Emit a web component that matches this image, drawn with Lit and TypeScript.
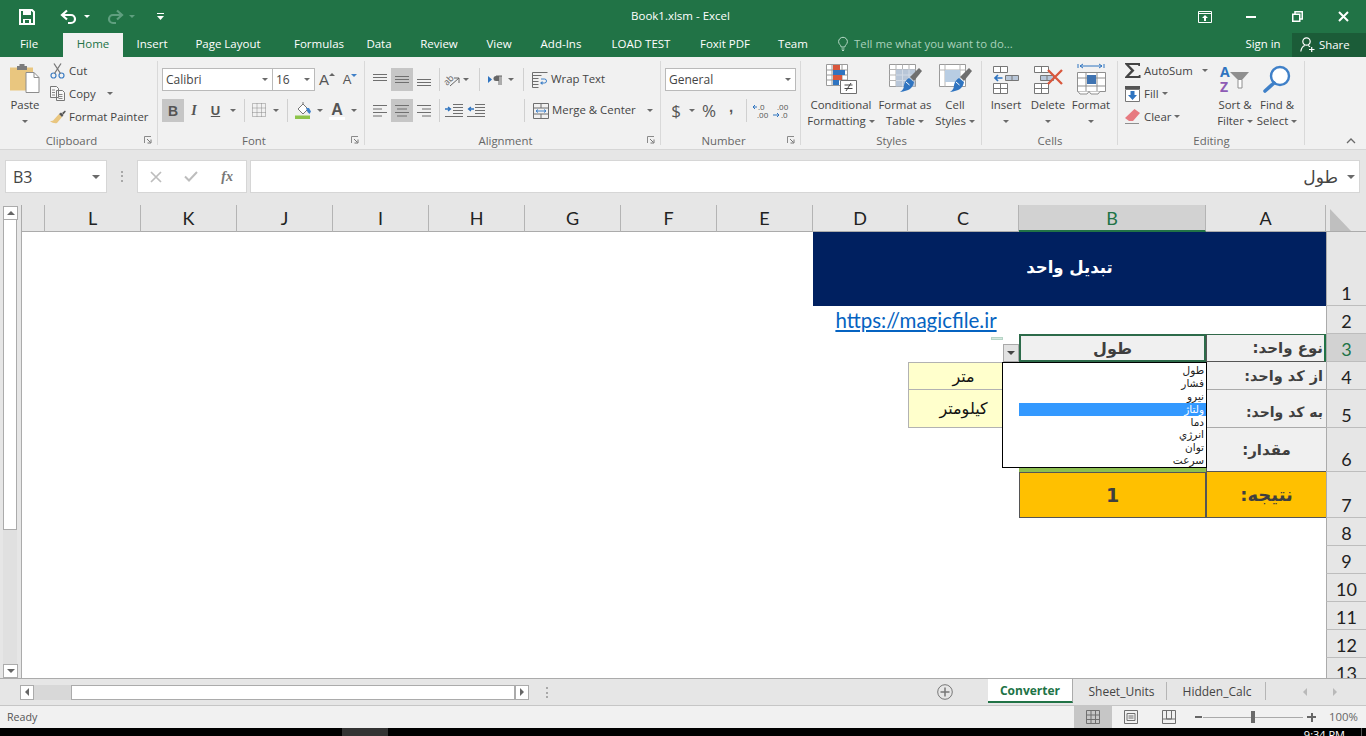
import { LitElement, html, svg, css } from "lit";
import { customElement } from "lit/decorators.js";

const L4 = (xs: number[], ws: number[]) =>
  html`<svg class="ico" width="16" height="16" viewBox="0 0 16 16">${xs.map((x, i) => svg`<path d="M${x} ${2.5 + i * 3.5}h${ws[i]}" stroke="#6f6f6f"/>`)}</svg>`;
const V3 = (ys: number[]) =>
  html`<svg class="ico" width="16" height="16" viewBox="0 0 16 16">${ys.map((y) => svg`<path d="M1 ${y + 0.5}h14" stroke="#6f6f6f"/>`)}</svg>`;

const saveI = html`<svg class="ico" width="16" height="16" viewBox="0 0 16 16"><path d="M1 1h12l2 2v12H1z" fill="none" stroke="#fff" stroke-width="2"/><path d="M4 1h8v5H4zM4 10h8v5H4z" fill="#fff"/><path d="M6 11h4v3H6z" fill="#217346"/></svg>`;
const undoI = (c: string, flip = false) => html`<svg class=${flip ? "ico flip" : "ico"} width="16" height="14" viewBox="0 0 16 14"><path d="M2 5h8a4 4 0 0 1 0 8H7" fill="none" stroke=${c} stroke-width="2.2"/><path d="M6 .5 1 5l5 4.5" fill="none" stroke=${c} stroke-width="2.2"/></svg>`;
const qatI = html`<svg class="ico" width="7" height="8" viewBox="0 0 7 8"><path d="M0 .5h7" stroke="#fff"/><path d="M0 3h7L3.5 7z" fill="#fff"/></svg>`;
const dispI = html`<svg class="ico" width="14" height="12" viewBox="0 0 14 12"><path d="M.5.5h13v11H.5z" fill="none" stroke="#fff"/><path d="M.5 2.5h13" stroke="#fff"/><path d="M7 4 4 7h2v3h2V7h2z" fill="#fff"/></svg>`;
const minI = html`<svg class="ico" width="10" height="2" viewBox="0 0 10 2"><path d="M0 0h10v2H0z" fill="#fff"/></svg>`;
const restI = html`<svg class="ico" width="11" height="11" viewBox="0 0 11 11"><path d="M.75 3.25h7v7h-7zM3 3V.75h7.25V8H8" fill="none" stroke="#fff" stroke-width="1.5"/></svg>`;
const closeI = html`<svg class="ico" width="11" height="11" viewBox="0 0 11 11"><path d="M1 1l9 9M10 1l-9 9" stroke="#fff" stroke-width="2"/></svg>`;
const bulbI = html`<svg class="ico" width="10" height="14" viewBox="0 0 10 14"><path d="M3.2 10C3 8 .6 7.2.6 4.700a4.400 4.400 0 0 1 8.800 0C9.400 7.200 7 8 6.800 10zM3.500 12h3M4 13.500h2" fill="none" stroke="#b7d9c6"/></svg>`;
const shareI = html`<svg class="ico" width="15" height="15" viewBox="0 0 15 15"><circle cx="6.500" cy="4.500" r="3.700" fill="none" stroke="#fff" stroke-width="1.200"/><path d="M.8 14.500c.6-3.700 2.500-5.500 4-6M8 8.500c.8.300 1.500.7 2 1.300M9 12.500h5.500M11.700 10v5" fill="none" stroke="#fff" stroke-width="1.200"/></svg>`;

const pasteI = html`<svg class="ico" width="30" height="31" viewBox="0 0 30 31"><path d="M0 4.500h23v23H0z" fill="#e9c67f"/><path d="M7 3h2.500V1h5v2H17v4H7z" fill="#7c7c7c"/><path d="M16 9.500h8l5 5v15H16z" fill="#fff" stroke="#8d8d8d"/><path d="M24 9.500v5h5" fill="none" stroke="#8d8d8d"/></svg>`;
const cutI = html`<svg class="ico" width="15" height="16" viewBox="0 0 15 16"><circle cx="3.500" cy="12.500" r="2.500" fill="none" stroke="#3f7fc4" stroke-width="1.200"/><circle cx="11.500" cy="12.500" r="2.500" fill="none" stroke="#3f7fc4" stroke-width="1.200"/><path d="M4.500 10.500 11 .5M10.500 10.500 4 .5" stroke="#777" stroke-width="1.300"/></svg>`;
const copyI = html`<svg class="ico" width="15" height="15" viewBox="0 0 15 15"><path d="M.5.5h6l2 2v9H.5zM6.500 4.500h6l2 2v8h-8z" fill="#f7f7f7" stroke="#777"/><path d="M2 4h3M2 6.500h3M2 9h3M8.500 8.500h4M8.500 10.500h4M8.500 12.500h4" stroke="#888"/></svg>`;
const painterI = html`<svg class="ico" width="16" height="14" viewBox="0 0 16 14"><path d="M9 4l3 3-5 6c-2 .5-5 0-7-2 2 0 3.500-.5 4-1.500z" fill="#e9c67f"/><path d="M9 4l2-1.500 2.500 2.500L12 7z" fill="#555"/><path d="M12 3l3-2.500.8 1L13.500 4.500z" fill="#555"/></svg>`;

const gridI = html`<svg class="ico" width="16" height="16" viewBox="0 0 16 16"><path d="M.5.5h13v13H.5zM.5 5h13M.5 9.500h13M5 .5v13M9.500.5v13" fill="none" stroke="#8a8a8a" stroke-dasharray="1 1"/></svg>`;
const fillI = html`<svg class="ico" width="17" height="17" viewBox="0 0 17 17"><path d="M3 7l5-5 5 5-5 5z" fill="#fff" stroke="#777"/><path d="M8 2V0" stroke="#777"/><path d="M11 6h3l2 3.500-1.500 2.500L12.500 10z" fill="#3f80c8"/><path d="M0 13.500h15V17H0z" fill="#8dc44a"/></svg>`;
const wrapI = html`<svg class="ico" width="16" height="16" viewBox="0 0 16 16"><path d="M.5.500h15M.5 3.500h9M.5 6.500h6M.5 9.500h6M.5 12.500h6M.5.5v15h6" fill="none" stroke="#6f6f6f"/><path d="M9 7h3.500a2 2 0 0 1 0 4H9" fill="none" stroke="#3f80c8"/><path d="M10.500 9 8 11l2.500 2z" fill="#3f80c8"/></svg>`;
const mergeI = html`<svg class="ico" width="16" height="16" viewBox="0 0 16 16"><path d="M.5.5h15v15H.5zM.5 5h15M.5 11h15M8 .5V5M8 11v4.500" fill="none" stroke="#6f6f6f"/><path d="M3 8h10M5 6.500 3 8l2 1.500M11 6.500 13 8l-2 1.500" fill="none" stroke="#3f80c8"/></svg>`;
const indentI = (rev: boolean) => html`<svg class="ico" width="18" height="13" viewBox="0 0 18 13"><path d="M8 .5h10M8 3.500h10M8 6.500h10M8 9.500h10M0 12.500h18" stroke="#6f6f6f"/><path d=${rev ? "M7 5H2M4 3 1.500 5 4 7" : "M0 5h5M3 3l2.500 2L3 7"} fill="none" stroke="#2f74c0" stroke-width="1.300"/></svg>`;
const orientI = html`<svg class="ico" width="17" height="16" viewBox="0 0 17 16"><text x="0" y="11" transform="rotate(-45 5 9)" font-size="9" font-family="Open Sans" fill="#666">ab</text><path d="M6 14l9-8M15 11V6h-5" fill="none" stroke="#666"/></svg>`;
const paraI = html`<svg class="ico" width="14" height="10" viewBox="0 0 14 10"><path d="M0 1l4 3.500L0 8z" fill="#2f74c0"/><path d="M8 1h6M11 1v9M13 1v9" fill="none" stroke="#666"/><path d="M8 1a2.300 2.300 0 0 0 0 5h3V1z" fill="#666"/></svg>`;
const decL = html`<svg class="ico" width="18" height="16" viewBox="0 0 18 16"><text x="6" y="7" font-size="8" font-family="Open Sans" fill="#555">.0</text><text x="5" y="15" font-size="8" font-family="Open Sans" fill="#555">.00</text><path d="M5 4H1M3 2 1 4l2 2" fill="none" stroke="#2f74c0"/></svg>`;
const decR = html`<svg class="ico" width="18" height="16" viewBox="0 0 18 16"><text x="5" y="7" font-size="8" font-family="Open Sans" fill="#555">.00</text><text x="9" y="15" font-size="8" font-family="Open Sans" fill="#555">.0</text><path d="M1 12h6M5 10l2 2-2 2" fill="none" stroke="#2f74c0"/></svg>`;

const condI = html`<svg class="ico" width="32" height="31" viewBox="0 0 32 31"><g transform="translate(1 1)"><path d="M.5.5h21v21H.5zM.5 6h21M.5 11h21M.5 16h21M6 .5v21M11 .5v21M16 .5v21" fill="#fff" stroke="#9a9a9a"/><path d="M7 1h7v5H7z" fill="#d9573c"/><path d="M7 6h12v5H7z" fill="#2f74c0"/><path d="M7 11h9v5H7z" fill="#d9573c"/><path d="M7 16h6v5H7z" fill="#2f74c0"/></g><path d="M15.500 17.500h16v13h-16z" fill="#fff" stroke="#6f6f6f"/><path d="M19.500 22h8M19.500 25.500h8M26 20l-5 8" stroke="#444" fill="none"/></svg>`;
const tableI = (fill: boolean) => html`<svg class="ico" width="34" height="31" viewBox="0 0 34 31"><path d="M1.500 1.500h26v22h-26z" fill="#fff" stroke="#9a9a9a"/>${fill ? svg`<path d="M1.500 6.500h26M1.500 12h26M1.500 17.500h26M8 1.500v22M14.500 1.500v22M21 1.500v22" stroke="#b5b5b5" fill="none"/><path d="M8 6.500h19v17H8z" fill="#b8c6d8"/><path d="M8 12h19M8 17.500h19M14.500 6.500v17M21 6.500v17" stroke="#d3dbe6" fill="none"/>` : svg`<path d="M1.500 7h26M7 1.500v22M22 1.500v22" stroke="#b5b5b5" fill="none"/><path d="M7 7h15v12H7z" fill="#b8cde3"/>`}<path d="M22 14l9-9 3 3-8 10z" fill="#6f6f6f"/><path d="M21 15l5 4c-1 6-5 9-14 10 3-2 4-4 4-7 1-4 3-6 5-7z" fill="#2f74c0"/><path d="M18 19l3.500 3" stroke="#fff"/></svg>`;
const insI = html`<svg class="ico" width="28" height="31" viewBox="0 0 28 31"><path d="M1.500 3.500h14v6h-14zM8.500 3.500v6M1.500 20.500h14v10h-14zM8.500 20.500v10M1.500 25.500h14" fill="#fff" stroke="#777"/><path d="M13.500 12.500h13v5h-13zM20 12.500v5" fill="#b8c6d8" stroke="#777"/><path d="M10.500 15H3M6 12l-3 3 3 3" fill="none" stroke="#2f74c0" stroke-width="1.700"/></svg>`;
const delI = html`<svg class="ico" width="31" height="31" viewBox="0 0 31 31"><path d="M1.500 3.500h14v6h-14zM8.500 3.500v6M1.500 20.500h14v10h-14zM8.500 20.500v10M1.500 25.500h14" fill="#fff" stroke="#777"/><path d="M7.500 12.500h13v5h-13zM14 12.500v5" fill="#b8c6d8" stroke="#777"/><path d="M15 7l14 14M29 7 15 21" stroke="#d9573c" stroke-width="2.300"/></svg>`;
const fmtI = html`<svg class="ico" width="29" height="31" viewBox="0 0 29 31"><path d="M1 1v4M27 1v4M3 3h22M6 1 3 3l3 2M22 1l3 2-3 2" fill="none" stroke="#2f74c0"/><path d="M.5 9.500h28v19H.5zM9 9.500v19M20 9.500v19M.5 15h28M.5 23h28" fill="#fff" stroke="#8f8f8f"/><path d="M10 12h9v9h-9z" fill="#3f73b1"/><path d="M1 28.500l2 2.500h7l2-2.500M12 28.500l2 2.500h7l2-2.500" fill="#fff" stroke="#8f8f8f"/></svg>`;
const sigmaI = html`<svg class="ico" width="16" height="15" viewBox="0 0 16 15"><path d="M0 0h15v3h-1.500L13 2H4l5.500 5.500L4 13h9.500l.5-1h1.500v3H0v-1l6-6.500L0 1z" fill="#444"/></svg>`;
const fillDownI = html`<svg class="ico" width="15" height="16" viewBox="0 0 15 16"><path d="M.5 3.500h14v12H.5z" fill="#fff" stroke="#777"/><path d="M0 0h15v3H0z" fill="#555"/><path d="M5.500 5h4v4H12l-4.500 5L3 9h2.500z" fill="#2f74c0"/></svg>`;
const clearI = html`<svg class="ico" width="15" height="15" viewBox="0 0 15 15"><path d="M9.500 0 15 4 8 12H4L0 9z" fill="#e77a80"/><path d="M0 14.500h14" stroke="#8f8f8f"/></svg>`;
const sortI = html`<svg class="ico" width="30" height="30" viewBox="0 0 30 30"><text x="0" y="13" font-size="14" font-weight="700" font-family="Open Sans" fill="#2f74c0">A</text><text x="0" y="28" font-size="14" font-weight="700" font-family="Open Sans" fill="#8e5bb5">Z</text><path d="M10 8h19l-7 8v8h-4v-8z" fill="#8f8f8f"/><path d="M18 16v8h4v-8" fill="#fff" stroke="#8f8f8f"/></svg>`;
const findI = html`<svg class="ico" width="28" height="28" viewBox="0 0 28 28"><circle cx="17" cy="11" r="9" fill="#fff" stroke="#3f80c8" stroke-width="2.400"/><path d="M11 18 2 26" stroke="#3f80c8" stroke-width="3.600" stroke-linecap="round"/></svg>`;
const launcherI = html`<svg class="ico" width="8" height="8" viewBox="0 0 8 8"><path d="M.5 7V.5H7" fill="none" stroke="#8a8a8a"/><path d="M3 3l3.500 3.500M7 3.500V7H3.500" fill="none" stroke="#777"/></svg>`;
const upI = html`<svg class="ico" width="10" height="6" viewBox="0 0 10 6"><path d="M1 5l4-4 4 4" fill="none" stroke="#6a6a6a" stroke-width="1.300"/></svg>`;

const crossI = html`<svg class="ico" width="12" height="12" viewBox="0 0 12 12"><path d="M1 1l10 10M11 1 1 11" stroke="#bdbdbd" stroke-width="1.700"/></svg>`;
const checkI = html`<svg class="ico" width="14" height="11" viewBox="0 0 14 11"><path d="M1 5.500l4 4 8-8.500" fill="none" stroke="#bdbdbd" stroke-width="2"/></svg>`;
const plusI = html`<svg class="ico" width="16" height="16" viewBox="0 0 16 16"><circle cx="8" cy="8" r="7.300" fill="none" stroke="#777"/><path d="M8 3.500v9M3.500 8h9" stroke="#777" stroke-width="1.500"/></svg>`;
const viewN = html`<svg class="ico" width="14" height="14" viewBox="0 0 14 14"><path d="M.5.5h13v13H.5zM.5 5h13M.5 9.500h13M5 .5v13M9.500.5v13" fill="none" stroke="#6f6f6f"/></svg>`;
const viewP = html`<svg class="ico" width="14" height="14" viewBox="0 0 14 14"><path d="M.5.5h13v13H.5zM3 3.500h8v7H3zM4.500 6h5M4.500 8h5" fill="none" stroke="#6f6f6f"/></svg>`;
const viewB = html`<svg class="ico" width="14" height="14" viewBox="0 0 14 14"><path d="M.5.5v13h13V.5M.5 9h13M4.500.5V9h5V.5M.5.5h13" fill="none" stroke="#6f6f6f"/></svg>`;

const TABS = ["File", "Home", "Insert", "Page Layout", "Formulas", "Data", "Review", "View", "Add-Ins", "LOAD TEST", "Foxit PDF", "Team"];
const COLS: [string, number][] = [["L", 2], ["K", 3], ["J", 4], ["I", 5], ["H", 6], ["G", 7], ["F", 8], ["E", 9], ["D", 10], ["C", 11], ["B", 12], ["A", 13]];
const ITEMS = ["طول", "فشار", "نیرو", "ولتاژ", "دما", "انرژي", "توان", "سرعت"];

@customElement("app-root")
export class AppRoot extends LitElement {
  static styles = css`
    :host { display: block; width: 1366px; height: 736px; overflow: hidden; font-family: "Open Sans", "Noto Sans", sans-serif; font-size: 11.4px; color: #444; background: #f1f1f1; }
    * { box-sizing: border-box; }
    .ico { display: block; flex: none; overflow: visible; }
    .flip { transform: scaleX(-1); }
    .app { display: flex; flex-direction: column; height: 736px; }

    .title { flex: none; height: 33px; background: #217346; color: #fff; display: grid; grid-template-columns: 500px 1fr 500px; align-items: center; }
    .qat { display: flex; align-items: center; padding-left: 19px; }
    .qat .undo { margin-left: 26px; }
    .qat .a1 { margin-left: 7px; }
    .qat .redo { margin-left: 17px; }
    .qat .a2 { margin-left: 6px; }
    .qat .cust { margin-left: 22px; }
    .wt { text-align: center; font-size: 11.5px; padding: 0 5px 2px 0; }
    .win { display: grid; grid-template-columns: repeat(4, 46px); justify-content: end; justify-items: center; align-items: center; }
    .tarr { width: 0; height: 0; border: 3px solid transparent; border-top: 3px solid #fff; border-bottom: 0; }
    .tarr.dim { border-top-color: #5f9f7f; }

    .tabs { flex: none; height: 24px; background: #217346; display: grid; grid-template-columns: 63px 60px 58px 94px 88px 32px 88px 32px 92px 68px 100px 36px 1fr; color: #fff; }
    .tab { display: flex; align-items: center; justify-content: center; font-size: 11.5px; white-space: nowrap; padding-bottom: 3px; }
    .tab.file { padding-right: 5px; }
    .tab.home { background: #f1f1f1; color: #217346; }
    .tabend { display: flex; align-items: center; }
    .tell { display: flex; align-items: center; gap: 6px; margin-left: 27px; color: #a9d1bb; flex: 1; padding-bottom: 3px; }
    .signin { width: 58px; text-align: center; color: #fff; padding-bottom: 3px; }
    .share { width: 74px; height: 24px; background: #1b5c38; display: flex; align-items: center; gap: 4px; padding: 0 0 2px 8px; color: #fff; }

    .ribbon { flex: none; height: 93px; background: #f1f1f1; border-bottom: 1px solid #d6d6d6; display: flex; }
    .group { flex: none; display: flex; flex-direction: column; position: relative; }
    .group.sep::after { content: ""; position: absolute; right: 0; top: 4px; bottom: 4px; width: 1px; background: #d9d9d9; }
    .gbody { height: 75px; display: flex; }
    .glabel { height: 16px; display: flex; align-items: center; color: #666; font-size: 11.4px; }
    .glabel span { flex: 1; text-align: center; }
    .launch { width: 15px; flex: none; display: flex; justify-content: flex-start; padding-left: 1px; }
    .g-clip { width: 158px; } .g-font { width: 207px; } .g-align { width: 296px; } .g-num { width: 140px; }
    .g-styles { width: 181px; } .g-cells { width: 136px; } .g-edit { width: 187px; }
    .g-rest { flex: 1; display: flex; align-items: flex-end; justify-content: flex-end; padding: 0 10px 5px 0; }
    .pad5 { padding-left: 5px; } .pad3 { padding-left: 3px; }

    .large { flex: none; display: flex; flex-direction: column; align-items: center; line-height: 16px; padding-top: 5px; text-align: center; white-space: nowrap; color: #444; }
    .large .iw { height: 33px; display: flex; align-items: center; justify-content: center; margin-bottom: 2px; }
    .large .ln { height: 16px; display: flex; align-items: center; gap: 3px; justify-content: center; }
    .w50 { width: 50px; } .w42 { width: 42px; } .w44 { width: 44px; } .w58 { width: 58px; } .w70 { width: 70px; }
    .arr { display: inline-block; width: 0; height: 0; border: 3px solid transparent; border-top: 3px solid #6a6a6a; border-bottom: 0; flex: none; }
    .arr.big { border-width: 4px 4px 0; }

    .smalls { display: flex; flex-direction: column; padding-top: 2px; }
    .srow { height: 23px; display: flex; align-items: center; white-space: nowrap; color: #444; }
    .siw { width: 19px; flex: none; display: flex; justify-content: flex-start; }
    .clip-s { width: 108px; }
    .clip-arr { margin-left: 11px; }

    .tools { display: flex; flex-direction: column; padding: 11px 0 0 4px; gap: 8px; }
    .trow { display: flex; height: 23px; align-items: center; }
    .b { height: 23px; display: flex; align-items: center; justify-content: center; flex: none; color: #555; }
    .b.on { background: #c6c6c6; }
    .w8 { width: 8px; } .w10 { width: 10px; } .w12 { width: 12px; } .w16 { width: 16px; } .w18 { width: 18px; } .w20 { width: 20px; }
    .w21 { width: 21px; } .w22 { width: 22px; } .w23 { width: 23px; } .w24 { width: 24px; } .w33 { width: 33px; }
    .vs { width: 1px; height: 23px; background: #d0d0d0; }
    .combo { height: 23px; background: #fff; border: 1px solid #bababa; display: flex; align-items: center; padding: 0 4px 0 3px; justify-content: space-between; flex: none; color: #444; font-size: 12px; }
    .cfont { width: 111px; } .csize { width: 43px; margin-left: -1px; } .cnum { width: 131px; }
    .txB { font-family: "Liberation Sans", sans-serif; font-weight: 700; font-size: 14px; color: #555; }
    .comma { font-family: "Liberation Sans", sans-serif; font-weight: 700; font-size: 15px; color: #555; line-height: 8px; margin-bottom: 8px; }
    .txI { font-family: "Liberation Serif", serif; font-style: italic; font-weight: 700; font-size: 14px; color: #555; }
    .txU { font-family: "Liberation Sans", sans-serif; font-weight: 700; font-size: 13px; text-decoration: underline; color: #555; }
    .txA { font-family: "Liberation Sans", sans-serif; font-size: 15px; color: #555; display: flex; align-items: flex-start; }
    .txA2 { font-family: "Liberation Sans", sans-serif; font-size: 13px; color: #555; display: flex; align-items: flex-start; }
    .tup { width: 0; height: 0; border: 3px solid transparent; border-bottom: 3px solid #666; border-top: 0; margin-top: 2px; }
    .tdn { width: 0; height: 0; border: 3px solid transparent; border-top: 3px solid #3f80c8; border-bottom: 0; margin-top: 2px; }
    .txC { font-family: "Liberation Sans", sans-serif; font-weight: 700; font-size: 16px; color: #555; border-bottom: 3px solid #fff; line-height: 15px; width: 16px; text-align: center; }
    .txN { font-size: 17px; color: #555; }
    .wraprow { margin-left: 5px; gap: 3px; color: #444; display: flex; align-items: center; white-space: nowrap; }
    .wraprow span { padding-bottom: 2px; }
    .mergearr { margin-left: 8px; }
    .ed-s { width: 96px; padding-left: 7px; }
    .ed-arr { margin-left: 9px; }
    .ed-arr2 { margin-left: 3px; }

    .fbar { flex: none; height: 55px; background: #e6e6e6; display: flex; align-items: center; padding: 0 6px 2px 5px; }
    .namebox { width: 102px; height: 33px; background: #fff; border: 1px solid #d6d6d6; display: flex; align-items: center; justify-content: space-between; padding: 0 6px 0 7px; font-size: 16px; color: #444; }
    .dots { width: 30px; display: flex; justify-content: center; }
    .dots i { display: block; width: 2px; height: 11px; background: repeating-linear-gradient(#a8a8a8 0 2px, transparent 2px 4.5px); }
    .fbtns { width: 110px; height: 33px; background: #fff; border: 1px solid #d6d6d6; display: grid; grid-template-columns: repeat(3, 1fr); align-items: center; justify-items: center; margin-right: 3px; padding-right: 1px; }
    .fx { font-family: "Liberation Serif", serif; font-style: italic; font-weight: 700; font-size: 14px; color: #777; }
    .finput { flex: 1; height: 33px; background: #fff; border: 1px solid #d6d6d6; display: flex; align-items: center; justify-content: flex-end; gap: 9px; padding-right: 4px; font-family: "DejaVu Sans", sans-serif; font-size: 17px; color: #444; }

    .sheet { flex: none; height: 473px; display: flex; overflow: hidden; background: #fff; }
    .vbar { width: 22px; flex: none; background: #e6e6e6; border-right: 1px solid #ababab; display: flex; flex-direction: column; padding: 1px 4px 0 3px; }
    .sb { width: 15px; height: 14px; flex: none; background: #fff; border: 1px solid #ababab; display: flex; align-items: center; justify-content: center; }
    .thumb { height: 310px; flex: none; background: #fff; border: 1px solid #ababab; border-top: 0; }
    .track { flex: 1; background: #e0e0e0; }
    .up { width: 0; height: 0; border: 4px solid transparent; border-bottom: 4px solid #666; border-top: 0; }
    .dn { width: 0; height: 0; border: 4px solid transparent; border-top: 4px solid #666; border-bottom: 0; }
    .lf { width: 0; height: 0; border: 4px solid transparent; border-right: 4px solid #666; border-left: 0; }
    .rt { width: 0; height: 0; border: 4px solid transparent; border-left: 4px solid #666; border-right: 0; }
    .grid { position: relative; flex: 1; display: grid; grid-template-columns: 23px repeat(8, 96px) 95px 111px 187px 120px 40px; grid-template-rows: 27px 74px 28px 28px 28px 38px 44px 46px repeat(6, 28px); align-content: start; font-family: "Lato", "Open Sans", sans-serif; }
    .ch { background: #e6e6e6; border-right: 1px solid #b4b4b4; border-bottom: 1px solid #ababab; display: flex; align-items: center; justify-content: center; font-size: 18px; color: #222; grid-row: 1; }
    .ch0 { grid-column: 1; }
    .ch.sel { background: #d2d2d2; color: #217346; border-bottom: 2px solid #217346; }
    .corner { grid-column: 14; grid-row: 1; background: #e6e6e6; border-bottom: 1px solid #ababab; padding: 4px 0 0 4px; }
    .rh { grid-column: 14; background: #e6e6e6; border-bottom: 1px solid #bdbdbd; border-left: 1px solid #ababab; display: flex; align-items: flex-end; justify-content: center; font-size: 18px; line-height: 22px; padding-bottom: 1px; color: #222; }
    .rh.sel { background: #d2d2d2; color: #217346; }

    .ar { font-family: "DejaVu Sans", sans-serif; display: flex; align-items: center; justify-content: center; direction: rtl; white-space: nowrap; overflow: hidden; }
    .c-title { grid-column: 10 / 14; grid-row: 2; background: #002060; color: #fff; font-weight: 700; font-size: 16.5px; padding-bottom: 3px; }
    .c-link { grid-column: 10 / 12; grid-row: 3; display: flex; align-items: center; justify-content: center; color: #0563c1; text-decoration: underline; font-size: 20.5px; white-space: nowrap; }
    .lab { background: #f0f0f0; color: #3f3f3f; font-weight: 700; font-size: 15px; border-bottom: 1px solid #555; border-left: 1px solid #555; }
    .lab.rr { justify-content: flex-start; padding-right: 3px; }
    .a3 { grid-column: 13; grid-row: 4; border-top: 1px solid #31694a; border-right: 2px solid #217346; }
    .lab.a3 { padding-right: 1px; }
    .b3 { grid-column: 12; grid-row: 4; border: 2px solid #2d6b4a; background: #f0f0f0; color: #3f3f3f; font-weight: 700; font-size: 16px; }
    .a4 { grid-column: 13; grid-row: 5; border-bottom-color: #aaa; font-size: 14.5px; }
    .a5 { grid-column: 13; grid-row: 6; padding-top: 7px; border-bottom-color: #aaa; font-size: 14px; }
    .a6 { grid-column: 13; grid-row: 7; }
    .a7 { grid-column: 13; grid-row: 8; background: #ffc000; font-size: 18px; }
    .b7 { grid-column: 12; grid-row: 8; background: #ffc000; display: flex; align-items: center; justify-content: center; font-family: "DejaVu Sans", sans-serif; font-weight: 700; font-size: 19px; color: #3f3f3f; border: 1px solid #555; }
    .b6 { grid-column: 12; grid-row: 7; background: #8dbf4f; }
    .yel { background: #ffffcc; border: 1px solid #b2b2b2; color: #111; font-size: 16px; grid-column: 11; }
    .c4 { grid-row: 5; }
    .c5 { grid-row: 6; border-top: 0; }
    .ddbtn { position: absolute; left: 981px; top: 139px; width: 16px; height: 18px; background: #e2e2e2; border: 1px solid #a9a9a9; display: flex; align-items: center; justify-content: center; z-index: 2; }
    .ddbtn i { display: block; width: 0; height: 0; border: 4px solid transparent; border-top: 4px solid #444; border-bottom: 0; }
    .tag { position: absolute; left: 969px; top: 132px; width: 12px; height: 3px; background: #d5e8df; border: 1px solid #b6d5c6; }
    .list { position: absolute; left: 980px; top: 157px; width: 205px; height: 106px; background: #fff; border: 1px solid #000; padding-top: 1px; z-index: 3; }
    .li { height: 12.9px; line-height: 12.9px; margin-left: 16px; padding-right: 2px; text-align: right; direction: rtl; font-family: "DejaVu Sans", sans-serif; font-size: 10.5px; color: #222; white-space: nowrap; overflow: hidden; }
    .li.on { background: #3399ff; color: #fff; }

    .tabbar { flex: none; height: 28px; background: #e6e6e6; border-top: 1px solid #ababab; border-bottom: 1px solid #c6c6c6; display: flex; align-items: center; color: #444; }
    .hs { display: flex; align-items: center; margin-left: 20px; width: 509px; }
    .hb { width: 14px; height: 15px; background: #fff; border: 1px solid #ababab; display: flex; align-items: center; justify-content: center; flex: none; }
    .htrack { width: 37px; height: 15px; background: #d8d8d8; flex: none; }
    .hthumb { flex: 1; height: 15px; background: #fff; border: 1px solid #ababab; }
    .hdots { margin-left: 8px; width: 20px; }
    .plus { margin-left: 380px; margin-right: 35px; }
    .st { display: flex; align-items: center; justify-content: center; font-size: 12px; white-space: nowrap; }
    .st.act { width: 85px; background: #fff; color: #217346; font-weight: 700; border-bottom: 2px solid #217346; border-right: 1px solid #ababab; height: 24px; align-self: flex-start; }
    .st.t2 { width: 94px; border-right: 1px solid #b5b5b5; height: 18px; padding-left: 4px; margin-bottom: 2px; }
    .st.t3 { width: 99px; border-right: 1px solid #b5b5b5; height: 18px; padding-left: 2px; margin-bottom: 2px; }
    .nav { margin-left: 37px; width: 34px; display: flex; justify-content: space-between; opacity: .35; }
    .nav i { display: block; }

    .status { flex: none; height: 22px; background: #f1f1f1; display: flex; align-items: center; padding-left: 7px; color: #555; font-size: 10.7px; }
    .ready { width: 1067px; padding-bottom: 1px; }
    .vb { width: 38px; height: 22px; display: flex; align-items: center; justify-content: center; flex: none; }
    .vb.on { background: #c6c6c6; }
    .zm { width: 130px; display: flex; align-items: center; margin-left: 2px; flex: none; }
    .zm b { width: 7px; height: 2px; background: #666; flex: none; margin-left: 5px; }
    .ztrack { position: relative; width: 100px; height: 1px; background: #aaa; margin: 0 4px 0 1px; }
    .ztrack i { position: absolute; left: 48px; top: -6px; width: 4px; height: 12px; background: #6a6a6a; }
    .zp { width: 9px; height: 9px; background: linear-gradient(#666,#666) center/9px 2px no-repeat, linear-gradient(#666,#666) center/2px 9px no-repeat; flex: none; }
    .pct { margin-left: 9px; font-size: 11.4px; color: #666; padding-bottom: 1px; }

    .task { flex: none; height: 8px; background: #000; position: relative; overflow: hidden; display: flex; }
    .tk1 { width: 46px; margin-left: 342px; background: #333; flex: none; }
    .clock { position: absolute; right: 21px; top: 0; color: #fff; font-size: 11px; line-height: 14px; }
    .tk2 { position: absolute; left: 1361px; top: 0; width: 1px; height: 8px; background: #555; }
  `;

  render() {
    return html`<div class="app">
      <div class="title">
        <div class="qat">${saveI}<span class="undo">${undoI("#fff")}</span><i class="tarr a1"></i><span class="redo">${undoI("#5f9f7f", true)}</span><i class="tarr dim a2"></i><span class="cust">${qatI}</span></div>
        <div class="wt">Book1.xlsm - Excel</div>
        <div class="win">${dispI}${minI}${restI}${closeI}</div>
      </div>
      <div class="tabs">
        ${TABS.map((t, i) => html`<div class="tab ${i === 0 ? "file" : i === 1 ? "home" : ""}">${t}</div>`)}
        <div class="tabend">
          <div class="tell">${bulbI}<span>Tell me what you want to do...</span></div>
          <div class="signin">Sign in</div>
          <div class="share">${shareI}<span>Share</span></div>
        </div>
      </div>
      ${this.ribbon()}
      <div class="fbar">
        <div class="namebox"><span>B3</span><i class="arr big"></i></div>
        <div class="dots"><i></i></div>
        <div class="fbtns">${crossI}${checkI}<span class="fx">fx</span></div>
        <div class="finput"><span dir="rtl">طول</span><i class="arr big"></i></div>
      </div>
      ${this.sheet()}
      <div class="tabbar">
        <div class="hs"><div class="hb"><i class="lf"></i></div><div class="htrack"></div><div class="hthumb"></div><div class="hb"><i class="rt"></i></div></div>
        <div class="hdots dots"><i></i></div>
        <div class="plus">${plusI}</div>
        <div class="st act">Converter</div>
        <div class="st t2">Sheet_Units</div>
        <div class="st t3">Hidden_Calc</div>
        <div class="nav"><i class="lf"></i><i class="rt"></i></div>
      </div>
      <div class="status">
        <div class="ready">Ready</div>
        <div class="vb on">${viewN}</div><div class="vb">${viewP}</div><div class="vb">${viewB}</div>
        <div class="zm"><b></b><div class="ztrack"><i></i></div><div class="zp"></div></div>
        <div class="pct">100%</div>
      </div>
      <div class="task"><div class="tk1"></div><div class="clock">9:34 PM</div><div class="tk2"></div></div>
    </div>`;
  }

  label(t: string, launcher = false) {
    return html`<div class="glabel"><span>${t}</span>${launcher ? html`<div class="launch">${launcherI}</div>` : ""}</div>`;
  }

  ribbon() {
    const vs = (w: string) => html`<div class="b ${w}"><div class="vs"></div></div>`;
    const ar = (w: string) => html`<div class="b ${w}"><i class="arr"></i></div>`;
    return html`<div class="ribbon">
      <div class="group g-clip sep">
        <div class="gbody">
          <div class="large w50"><div class="iw">${pasteI}</div><div class="ln">Paste</div><div class="ln"><i class="arr"></i></div></div>
          <div class="smalls clip-s">
            <div class="srow"><span class="siw">${cutI}</span>Cut</div>
            <div class="srow"><span class="siw">${copyI}</span>Copy<i class="arr clip-arr"></i></div>
            <div class="srow"><span class="siw">${painterI}</span>Format Painter</div>
          </div>
        </div>
        ${this.label("Clipboard", true)}
      </div>
      <div class="group g-font sep">
        <div class="gbody"><div class="tools">
          <div class="trow">
            <div class="combo cfont"><span>Calibri</span><i class="arr"></i></div>
            <div class="combo csize"><span>16</span><i class="arr"></i></div>
            <div class="b w24"><span class="txA">A<i class="tup"></i></span></div>
            <div class="b w22"><span class="txA2">A<i class="tdn"></i></span></div>
          </div>
          <div class="trow">
            <div class="b w22 on"><span class="txB">B</span></div>
            <div class="b w20"><span class="txI">I</span></div>
            <div class="b w23"><span class="txU">U</span></div>
            ${ar("w12")}${vs("w10")}
            <div class="b w21">${gridI}</div>
            ${ar("w12")}${vs("w10")}
            <div class="b w22">${fillI}</div>
            ${ar("w12")}
            <div class="b w22"><span class="txC">A</span></div>
            ${ar("w12")}
          </div>
        </div></div>
        ${this.label("Font", true)}
      </div>
      <div class="group g-align sep">
        <div class="gbody"><div class="tools">
          <div class="trow">
            <div class="b w22">${V3([2, 5, 8])}</div>
            <div class="b w22 on">${V3([4, 7, 10])}</div>
            <div class="b w22">${V3([7, 10, 13])}</div>
            ${vs("w8")}
            <div class="b w18">${orientI}</div>
            ${ar("w10")}${vs("w16")}
            <div class="b w16">${paraI}</div>
            ${ar("w16")}${vs("w8")}
            <div class="wraprow">${wrapI}<span>Wrap Text</span></div>
          </div>
          <div class="trow">
            <div class="b w22">${L4([1, 1, 1, 1], [14, 9, 14, 9])}</div>
            <div class="b w22 on">${L4([1, 3, 1, 3], [14, 10, 14, 10])}</div>
            <div class="b w22">${L4([1, 6, 1, 6], [14, 9, 14, 9])}</div>
            ${vs("w8")}
            <div class="b w22">${indentI(false)}</div>
            <div class="b w22">${indentI(true)}</div>
            <div class="b w33"></div>
            ${vs("w8")}
            <div class="wraprow">${mergeI}<span>Merge &amp; Center</span><i class="arr mergearr"></i></div>
          </div>
        </div></div>
        ${this.label("Alignment", true)}
      </div>
      <div class="group g-num sep">
        <div class="gbody"><div class="tools">
          <div class="trow"><div class="combo cnum"><span>General</span><i class="arr"></i></div></div>
          <div class="trow">
            <div class="b w22"><span class="txN">$</span></div>
            ${ar("w10")}
            <div class="b w24"><span class="txN">%</span></div>
            <div class="b w20"><span class="comma">,</span></div>
            ${vs("w10")}
            <div class="b w20">${decL}</div>
            <div class="b w20">${decR}</div>
          </div>
        </div></div>
        ${this.label("Number", true)}
      </div>
      <div class="group g-styles sep">
        <div class="gbody pad5">
          <div class="large w70"><div class="iw">${condI}</div><div class="ln">Conditional</div><div class="ln">Formatting <i class="arr"></i></div></div>
          <div class="large w58"><div class="iw">${tableI(true)}</div><div class="ln">Format as</div><div class="ln">Table <i class="arr"></i></div></div>
          <div class="large w42"><div class="iw">${tableI(false)}</div><div class="ln">Cell</div><div class="ln">Styles <i class="arr"></i></div></div>
        </div>
        ${this.label("Styles")}
      </div>
      <div class="group g-cells sep">
        <div class="gbody pad3">
          <div class="large w42"><div class="iw">${insI}</div><div class="ln">Insert</div><div class="ln"><i class="arr"></i></div></div>
          <div class="large w42"><div class="iw">${delI}</div><div class="ln">Delete</div><div class="ln"><i class="arr"></i></div></div>
          <div class="large w44"><div class="iw">${fmtI}</div><div class="ln">Format</div><div class="ln"><i class="arr"></i></div></div>
        </div>
        ${this.label("Cells")}
      </div>
      <div class="group g-edit sep">
        <div class="gbody">
          <div class="smalls ed-s">
            <div class="srow"><span class="siw">${sigmaI}</span>AutoSum<i class="arr ed-arr"></i></div>
            <div class="srow"><span class="siw">${fillDownI}</span>Fill<i class="arr ed-arr2"></i></div>
            <div class="srow"><span class="siw">${clearI}</span>Clear<i class="arr ed-arr2"></i></div>
          </div>
          <div class="large w42"><div class="iw">${sortI}</div><div class="ln">Sort &amp;</div><div class="ln">Filter <i class="arr"></i></div></div>
          <div class="large w42"><div class="iw">${findI}</div><div class="ln">Find &amp;</div><div class="ln">Select <i class="arr"></i></div></div>
        </div>
        ${this.label("Editing")}
      </div>
      <div class="g-rest">${upI}</div>
    </div>`;
  }

  sheet() {
    const rows = [1, 2, 3, 4, 5, 6, 7, 8, 9, 10, 11, 12, 13];
    return html`<div class="sheet">
      <div class="vbar"><div class="sb"><i class="up"></i></div><div class="thumb"></div><div class="track"></div><div class="sb"><i class="dn"></i></div></div>
      <div class="grid">
        <div class="ch ch0"></div>
        ${COLS.map(([n, c]) => html`<div class="ch ${n === "B" ? "sel" : ""}" style="grid-column:${c}">${n}</div>`)}
        <div class="corner"><svg class="ico" width="21" height="22" viewBox="0 0 21 22"><path d="M0 0v22h21z" fill="#bfbfbf"/></svg></div>
        ${rows.map((r) => html`<div class="rh ${r === 3 ? "sel" : ""}" style="grid-row:${r + 1}">${r}</div>`)}
        <div class="ar c-title">تبدیل واحد</div>
        <div class="c-link">https://magicfile.ir</div>
        <div class="ar b3">طول</div>
        <div class="ar lab rr a3">نوع واحد:</div>
        <div class="ar lab rr a4">از کد واحد:</div>
        <div class="ar lab rr a5">به کد واحد:</div>
        <div class="ar lab a6">مقدار:</div>
        <div class="ar lab a7">نتیجه:</div>
        <div class="b6"></div>
        <div class="b7">1</div>
        <div class="ar yel c4">متر</div>
        <div class="ar yel c5">کیلومتر</div>
        <div class="tag"></div>
        <div class="ddbtn"><i></i></div>
        <div class="list">${ITEMS.map((t, i) => html`<div class="li ${i === 3 ? "on" : ""}">${t}</div>`)}</div>
      </div>
    </div>`;
  }
}
